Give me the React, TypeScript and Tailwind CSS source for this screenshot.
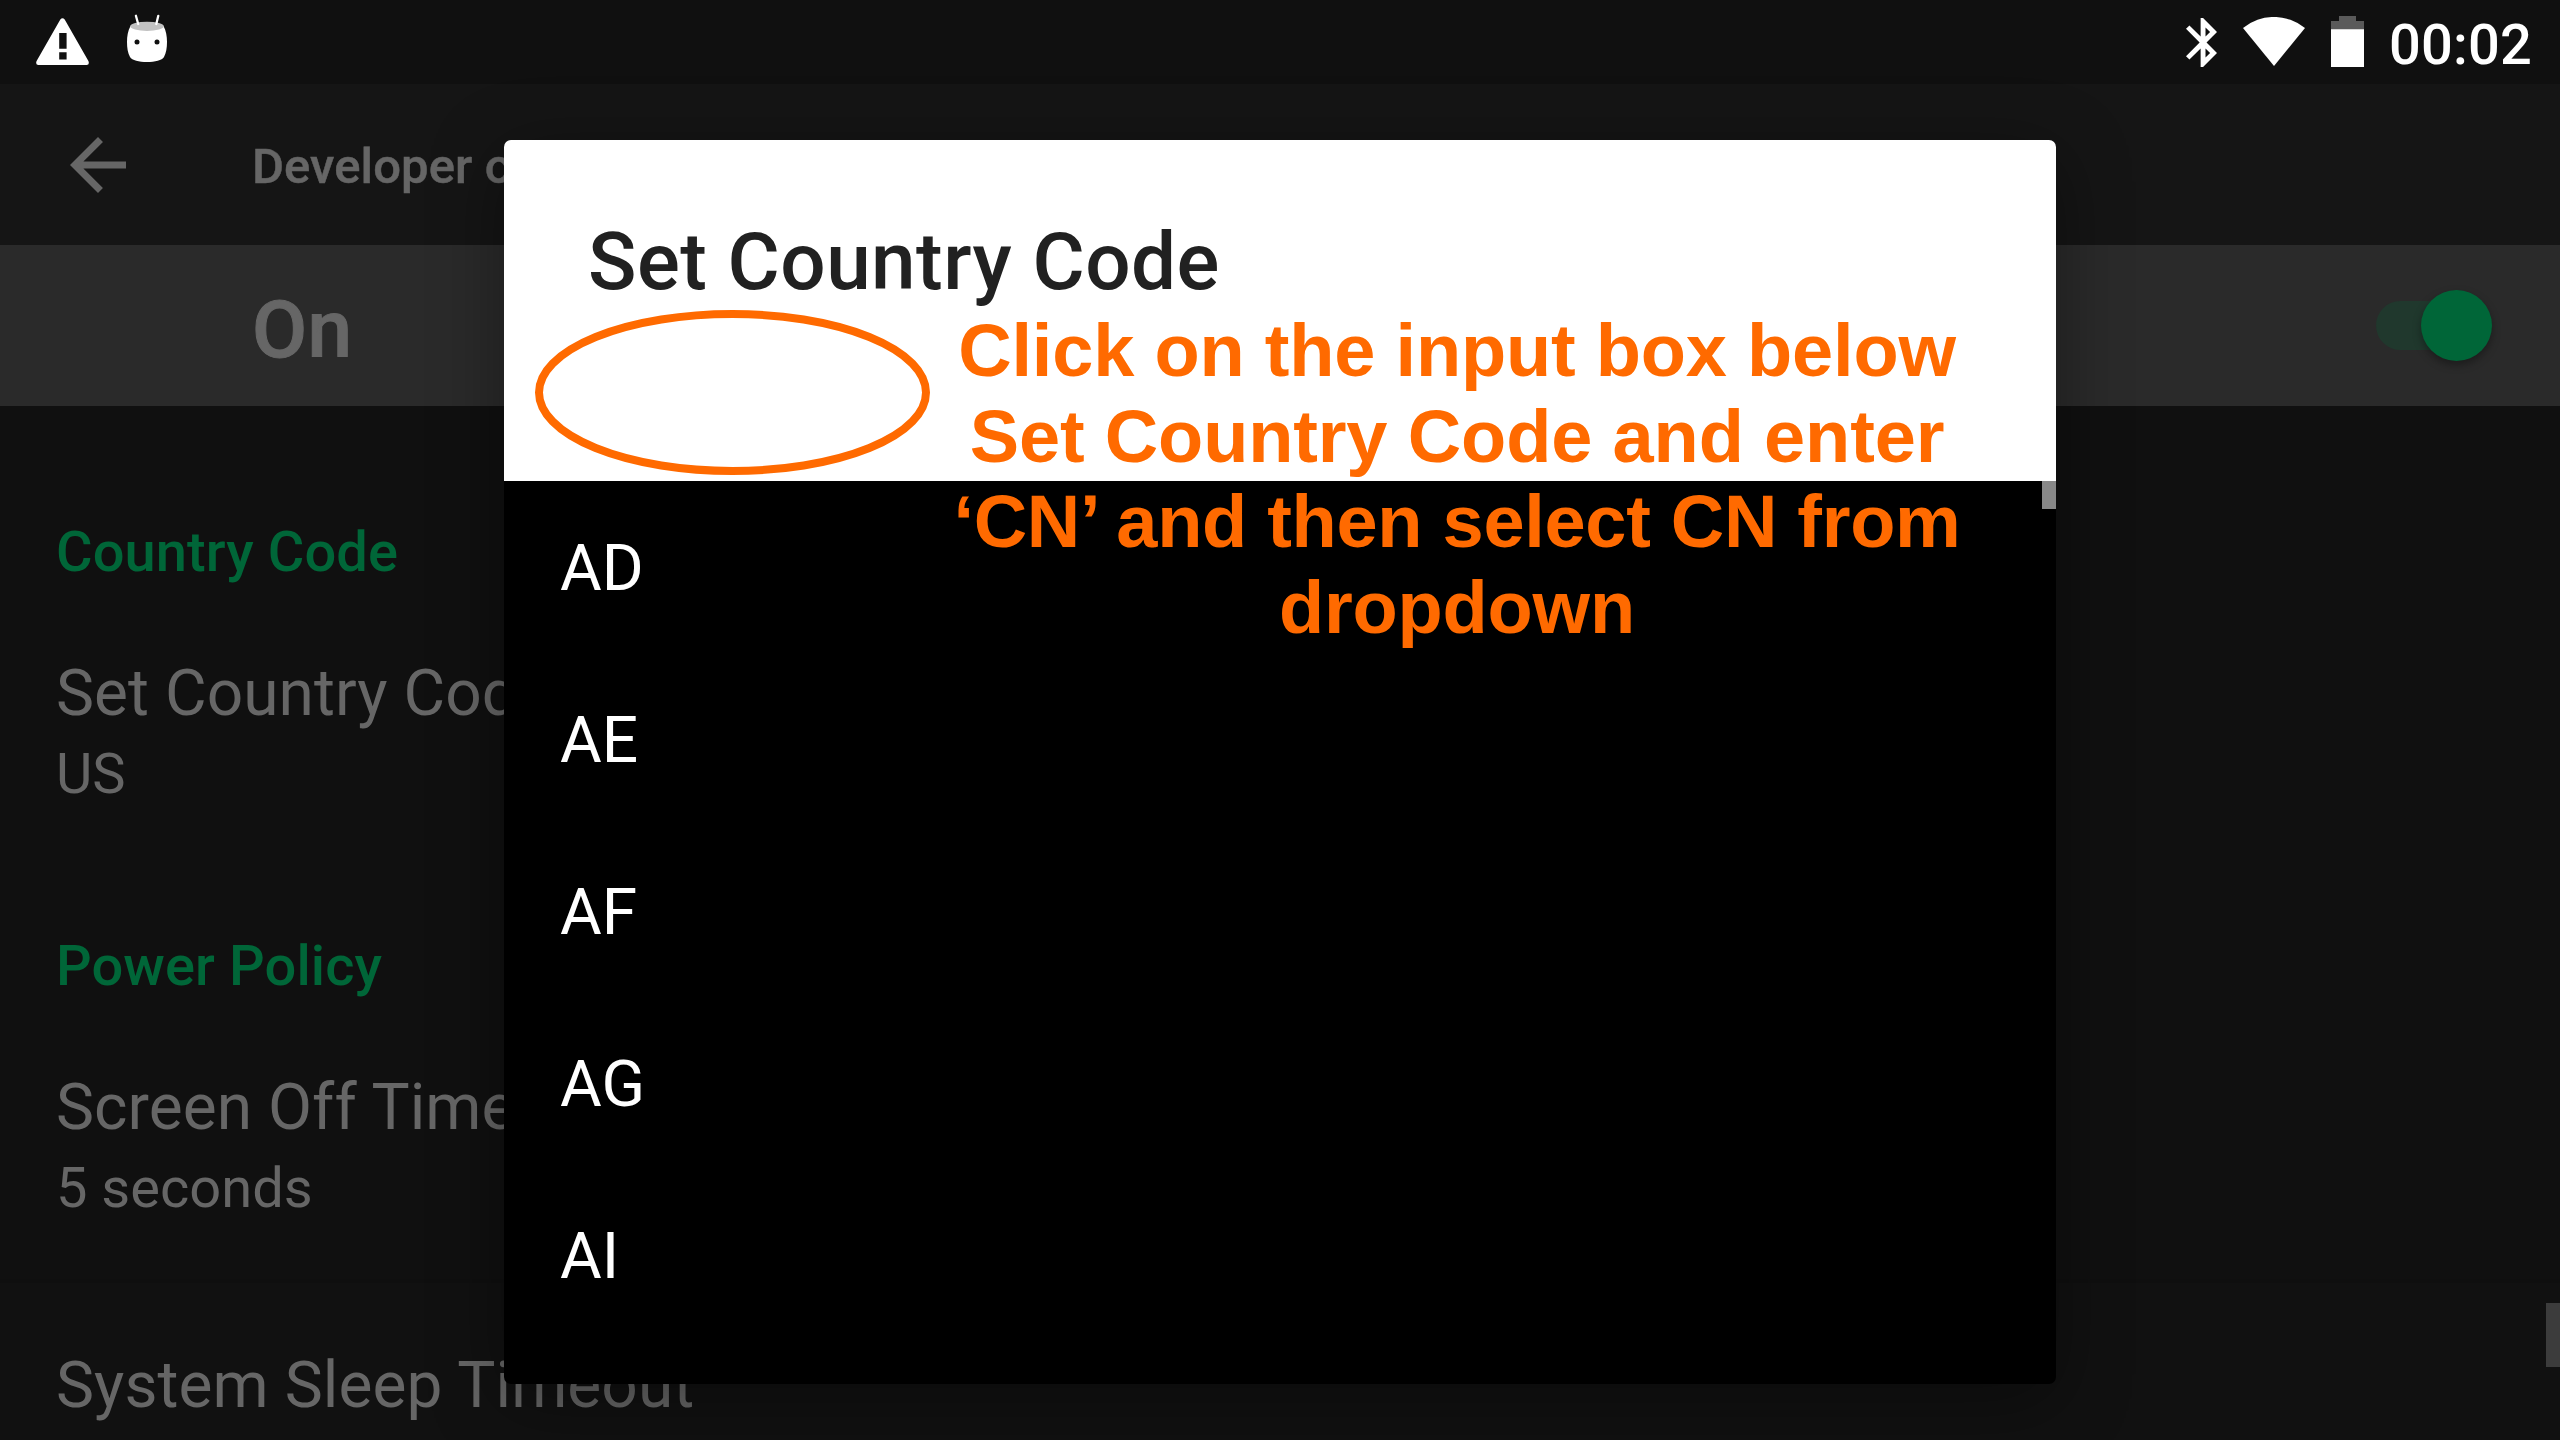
const COUNTRIES = ["AD", "AE", "AF", "AG", "AI"]

const SECTIONS = [
  { heading: "Country Code", title: "Set Country Code", summary: "US" },
  { heading: "Power Policy", title: "Screen Off Timeout", summary: "5 seconds" },
]

function StatusBar() {
  return (
    <div className="flex h-[84px] shrink-0 items-start justify-between bg-[#101010] pr-[28px] pl-9">
      <div className="flex items-start">
        <svg className="mt-[17.5px] h-[47px] w-[53px]" viewBox="0 0 53 47" fill="#fff">
          <path
            fillRule="evenodd"
            d="M24.3 1.6Q26.5 -0.9 28.7 1.6L52.4 43Q53.8 47 50.6 47H2.4Q-.8 47 .6 43ZM23.2 15V30.7H30.6V15ZM23.2 34.3V41.5H30.6V34.3Z"
          />
        </svg>
        <svg className="mt-[14px] ml-[38px] h-12 w-10" viewBox="0 0 40 48">
          <path
            fill="#fff"
            d="M3.5 12C.8 17 0 22 0 28C0 34 .8 39 3 43C5 46.500 12 48 20 48C28 48 35 46.500 37 43C39.200 39 40 34 40 28C40 22 39.200 17 36.500 12C30 17 10 17 3.500 12Z"
          />
          <ellipse cx="20" cy="12.300" rx="16.800" ry="4.600" fill="#c2c2c2" />
          <path d="M8.900 1.800L11.200 10M31.300 1.800L29.300 10" stroke="#fff" strokeWidth="2.300" strokeLinecap="round" />
          <circle cx="10" cy="28" r="2.500" fill="#101010" />
          <circle cx="30" cy="28" r="2.500" fill="#101010" />
        </svg>
      </div>
      <div className="flex items-start">
        <svg className="mt-[18px] h-[49px] w-[31px]" viewBox="5 2 12.71 20" fill="#fff">
          <path d="M17.71 7.71L12 2h-1v7.59L6.410 5 5 6.410 10.590 12 5 17.590 6.410 19 11 14.410V22h1l5.710-5.710-4.300-4.290 4.300-4.290zM13 5.830l1.880 1.880L13 9.590V5.830zm1.880 10.460L13 18.170v-3.760l1.880 1.880z" />
        </svg>
        <svg className="mt-[17px] ml-[26px] h-[49px] w-[62px]" viewBox="0 0 62 49" fill="#fff">
          <path d="M0 11A49 49 0 0 1 62 11L31 49Z" />
        </svg>
        <svg className="mt-4 ml-[26px] h-[51px] w-[33px]" viewBox="0 0 33 51">
          <path d="M8 0H25V5H33V14H0V5H8Z" fill="#5a5a5a" />
          <path d="M0 13.300H33V51H0Z" fill="#fff" />
        </svg>
        <span className="ml-[24.500px] pt-[3px] text-[56px] leading-[84px] font-medium tracking-[0.200px] text-white">00:02</span>
      </div>
    </div>
  )
}

function AppBar() {
  return (
    <div className="flex h-[161px] shrink-0 items-center bg-[#151515] pl-14">
      <svg className="h-[84px] w-[84px]" viewBox="0 0 24 24" fill="#666">
        <path d="M20 11H7.830l5.590-5.590L12 4l-8 8 8 8 1.410-1.410L7.830 13H20v-2z" />
      </svg>
      <span className="ml-28 pt-[5px] text-[49px] leading-[60px] font-medium tracking-[0.100px] text-[#666] [-webkit-text-stroke:0.500px_#666]">
        Developer options
      </span>
    </div>
  )
}

function SwitchBar() {
  return (
    <div className="flex h-[161px] shrink-0 items-center justify-between bg-[#2a2a2a] pr-[68px] pl-[252px]">
      <span className="pt-[8px] text-[80px] leading-[96px] font-medium tracking-[0.500px] text-[#666] [-webkit-text-stroke:1px_#666]">
        On
      </span>
      <div className="flex items-center">
        <div className="h-[49px] w-20 rounded-l-full bg-[#20382d]" />
        <div className="-ml-[35px] size-[71px] rounded-full bg-[#006638] shadow-[0_4px_8px_rgba(0,0,0,0.35)]" />
      </div>
    </div>
  )
}

function Settings() {
  return (
    <div className="flex flex-1 flex-col bg-[#101010] text-[#666]">
      {SECTIONS.map((s, i) => (
        <div key={s.heading} className={i === 0 ? "pt-[113px] pl-14" : "pt-[126px] pl-14"}>
          <h2 className="text-[56px] leading-[66px] font-medium tracking-[0.100px] text-[#006638]">{s.heading}</h2>
          <p className="mt-[71px] text-[64px] leading-[76px] tracking-[0.050px]">{s.title}</p>
          <p className="mt-[9px] text-[56px] leading-[66px]">{s.summary}</p>
        </div>
      ))}
      <div className="mt-[58px] h-1 bg-[#0f0f0f]" />
      <div className="flex flex-1 items-start justify-between bg-[#111111] pl-14">
        <p className="pt-[65px] text-[64px] leading-[76px] tracking-[0.080px]">System Sleep Timeout</p>
        <div className="mt-5 h-16 w-[14px] bg-[#3c3c3c]" />
      </div>
    </div>
  )
}

function CountryDialog() {
  return (
    <div className="absolute top-[140px] left-[504px] flex h-[1244px] w-[1552px] flex-col rounded-[7px] shadow-[0_16px_72px_rgba(0,0,0,0.38)]">
      <div className="h-[341px] shrink-0 rounded-t-[7px] bg-white pt-[74px] pl-[84px]">
        <h1 className="text-[80px] leading-[96px] font-medium tracking-[0.450px] text-[#212121]">Set Country Code</h1>
      </div>
      <div className="flex flex-1 items-start justify-between overflow-hidden rounded-b-[7px] bg-black">
        <ul className="flex-1">
          {COUNTRIES.map((c) => (
            <li key={c} className="flex h-[172px] items-center pt-[4px] pl-14 text-[64px] leading-[76px] text-white">
              {c}
            </li>
          ))}
        </ul>
        <div className="h-7 w-[14px] bg-[#888]" />
      </div>
      <svg className="absolute top-[170px] left-[31px] h-[165px] w-[395px]" viewBox="0 0 395 165">
        <ellipse cx="197.500" cy="82.500" rx="193.500" ry="78.500" fill="none" stroke="#ff6a00" strokeWidth="8" />
      </svg>
      <div className="absolute top-[168px] left-[403px] flex w-[1100px] flex-col items-center font-['Liberation_Sans',Arial,sans-serif] text-[74px] leading-[85.670px] font-bold whitespace-nowrap text-[#ff6a00]">
        <span className="tracking-[-0.200px]">Click on the input box below</span>
        <span className="tracking-[-0.150px]">Set Country Code and enter</span>
        <span className="tracking-[-0.300px]">‘CN’ and then select CN from</span>
        <span className="tracking-[-0.200px]">dropdown</span>
      </div>
    </div>
  )
}

export default function App() {
  return (
    <div className="relative flex h-[1440px] w-[2560px] flex-col overflow-hidden bg-[#101010] font-[Roboto,sans-serif]">
      <StatusBar />
      <AppBar />
      <SwitchBar />
      <Settings />
      <CountryDialog />
    </div>
  )
}
